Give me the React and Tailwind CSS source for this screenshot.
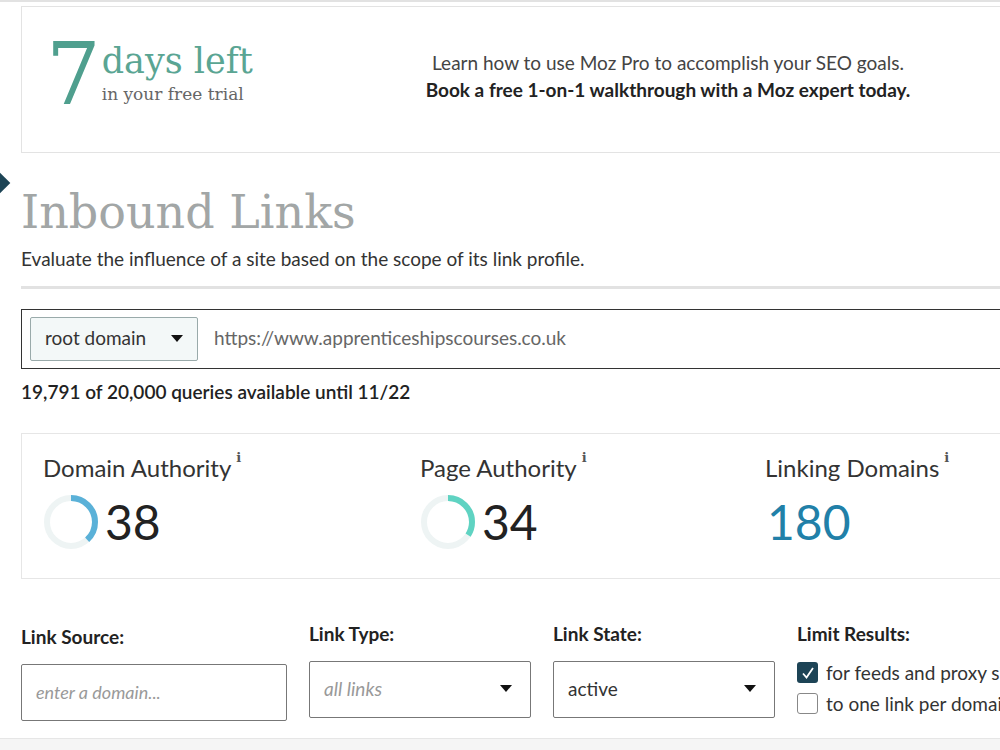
import React from "react";

const serif = { fontFamily: '"DejaVu Serif", "Liberation Serif", serif' };

const Donut = ({ value, color }) => {
  const r = 24;
  const c = 2 * Math.PI * r;
  return (
    <svg width="56" height="56" viewBox="0 0 56 56" className="shrink-0">
      <circle cx="28" cy="28" r={r} fill="none" stroke="#eef4f4" strokeWidth="6" />
      <circle
        cx="28"
        cy="28"
        r={r}
        fill="none"
        stroke={color}
        strokeWidth="6"
        strokeDasharray={`${(c * value) / 100} ${c}`}
        transform="rotate(-90 28 28)"
      />
    </svg>
  );
};

const Caret = () => (
  <svg width="12" height="8" viewBox="0 0 12 8">
    <path d="M0 0 L12 0 L6 7 Z" fill="#111" />
  </svg>
);

const Metric = ({ title, width, children }) => (
  <div className={`${width} shrink-0`}>
    <div className="text-[24px] text-[#333] leading-none flex items-start">
      {title}
      <span className="text-[13px] font-bold ml-[5px] -mt-[5px] text-[#555]" style={serif}>i</span>
    </div>
    <div className="flex items-center mt-[14px]">{children}</div>
  </div>
);

export default function App() {
  return (
    <div className="w-[1000px] h-[750px] overflow-hidden bg-white relative font-['Lato',sans-serif]">
      <div className="h-[2px] bg-[#e2e2e2]" />

      {/* left marker */}
      <div className="absolute left-[-9px] top-[175px] w-[16px] h-[16px] rotate-45 bg-[#1d4456]" />

      <div className="pl-[21px] w-[1100px]">
        {/* trial banner */}
        <div className="mt-[4px] h-[147px] border border-[#e3e3e3] flex items-center">
          <div className="flex items-center pl-[24px] w-[370px] -mt-[12px]" style={serif}>
            <span className="text-[86px] leading-none text-[#4f9f8e]">7</span>
            <div className="ml-[1px] flex flex-col">
              <span className="text-[35px] leading-none text-[#5aa593]">days left</span>
              <span className="text-[17px] leading-none mt-[7px] text-[#666]">in your free trial</span>
            </div>
          </div>
          <div className="w-[552px] text-center text-[19px] leading-[27px] -mt-[8px]">
            <div className="text-[#444]">Learn how to use Moz Pro to accomplish your SEO goals.</div>
            <div className="text-[#222] font-bold">Book a free 1-on-1 walkthrough with a Moz expert today.</div>
          </div>
        </div>

        {/* heading */}
        <h1 className="mt-[36px] text-[46px] leading-none text-[#a2a6a6]" style={serif}>
          Inbound Links
        </h1>
        <p className="mt-[10px] text-[19px] text-[#333]">
          Evaluate the influence of a site based on the scope of its link profile.
        </p>
        <div className="mt-[12px] h-[3px] bg-[#e2e2e2]" />

        {/* search */}
        <div className="mt-[20px] h-[60px] border border-[#333] flex items-center pl-[8px]">
          <div className="h-[44px] w-[168px] bg-[#f3f8f8] border border-[#9aa] rounded-[2px] flex items-center justify-between px-[14px] text-[19px] text-[#333]">
            root domain
            <Caret />
          </div>
          <span className="ml-[16px] text-[19px] text-[#666]">https://www.apprenticeshipscourses.co.uk</span>
        </div>
        <div className="mt-[9px] text-[19px] font-semibold text-[#222]">
          19,791 of 20,000 queries available until 11/22
        </div>

        {/* metrics */}
        <div className="mt-[27px] h-[146px] border border-[#e6e6e6] pl-[21px] pt-[22px] flex">
          <Metric title="Domain Authority" width="w-[377px]">
            <Donut value={38} color="#5ab1d8" />
            <span className="ml-[6px] text-[48px] leading-none text-[#222]">38</span>
          </Metric>
          <Metric title="Page Authority" width="w-[345px]">
            <Donut value={34} color="#5fd3c2" />
            <span className="ml-[6px] text-[48px] leading-none text-[#222]">34</span>
          </Metric>
          <Metric title="Linking Domains" width="w-[300px]">
            <span className="h-[56px] flex items-center ml-[2px] text-[48px] leading-none text-[#2180a8]">180</span>
          </Metric>
        </div>

        {/* filters */}
        <div className="mt-[41px] flex">
          <div className="w-[288px] shrink-0 pt-[3px]">
            <div className="text-[19px] font-bold text-[#222]">Link Source:</div>
            <div className="mt-[12px] w-[266px] h-[57px] border border-[#777] rounded-[2px] flex items-center px-[14px] text-[18px] italic text-[#999]">
              enter a domain...
            </div>
          </div>
          <div className="w-[244px] shrink-0">
            <div className="text-[19px] font-bold text-[#222]">Link Type:</div>
            <div className="mt-[12px] w-[222px] h-[57px] border border-[#777] rounded-[2px] flex items-center justify-between pl-[14px] pr-[18px] text-[19px] italic text-[#999]">
              all links
              <Caret />
            </div>
          </div>
          <div className="w-[244px] shrink-0">
            <div className="text-[19px] font-bold text-[#222]">Link State:</div>
            <div className="mt-[12px] w-[222px] h-[57px] border border-[#777] rounded-[2px] flex items-center justify-between pl-[14px] pr-[18px] text-[19px] text-[#333]">
              active
              <Caret />
            </div>
          </div>
          <div className="shrink-0">
            <div className="text-[19px] font-bold text-[#222]">Limit Results:</div>
            <div className="mt-[13px] flex items-center gap-[8px] text-[19px] leading-[22px] text-[#333] whitespace-nowrap">
              <span className="w-[21px] h-[21px] rounded-[3px] bg-[#1d4456] flex items-center justify-center">
                <svg width="14" height="14" viewBox="0 0 14 14">
                  <path d="M2 7.5 L5.5 11.5 L12 2" fill="none" stroke="#fff" strokeWidth="1.8" />
                </svg>
              </span>
              for feeds and proxy sites
            </div>
            <div className="mt-[9px] flex items-center gap-[8px] text-[19px] leading-[22px] text-[#333] whitespace-nowrap">
              <span className="w-[21px] h-[21px] rounded-[3px] border border-[#888] bg-white" />
              to one link per domain
            </div>
          </div>
        </div>
      </div>

      <div className="absolute left-0 right-0 bottom-0 h-[12px] bg-[#f5f5f5] border-t border-[#e6e6e6]" />
    </div>
  );
}
